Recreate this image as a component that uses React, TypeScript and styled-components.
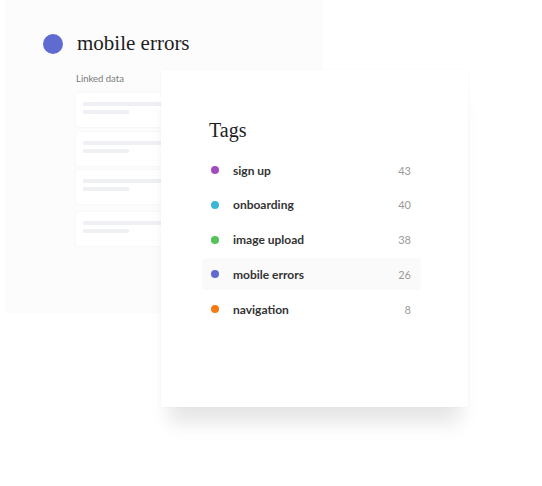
import React from "react";
import styled, { createGlobalStyle } from "styled-components";

const Global = createGlobalStyle`
  html, body { margin: 0; padding: 0; background: #ffffff; }
  body { font-family: Lato, "Liberation Sans", sans-serif; }
`;

const Stage = styled.div`
  position: relative;
  width: 542px;
  height: 486px;
  overflow: hidden;
  background: #ffffff;
`;

const BackPanel = styled.div`
  margin-left: 5px;
  width: 318px;
  height: 313px;
  background: #fcfcfc;
  box-sizing: border-box;
  padding: 34px 0 0 38px;
  display: flex;
  flex-direction: column;
`;

const Heading = styled.div`
  display: flex;
  align-items: center;
  gap: 14px;
  height: 20px;
`;

const BigDot = styled.span`
  width: 20px;
  height: 20px;
  border-radius: 50%;
  background: #5f6bd1;
  flex: none;
`;

const HeadingText = styled.span`
  font-family: "Liberation Serif", serif;
  font-size: 21px;
  color: #1e1e1e;
  line-height: 20px;
  position: relative;
  top: -1px;
`;

const Linked = styled.div`
  margin: 19px 0 0 33px;
  font-size: 9.5px;
  color: #7a7a7a;
  line-height: 12px;
`;

const SkeletonList = styled.div`
  margin: 8px 0 0 33px;
  display: flex;
  flex-direction: column;
`;

const SkeletonCard = styled.div<{ $gap: number }>`
  margin-top: ${(p) => p.$gap}px;
  width: 200px;
  height: 34px;
  background: #ffffff;
  border-radius: 3px;
  box-shadow: 0 0 3px rgba(0, 0, 0, 0.05);
  box-sizing: border-box;
  padding: 9px 0 0 7px;
  display: flex;
  flex-direction: column;
  gap: 4px;
`;

const Bar = styled.div<{ $w: number }>`
  width: ${(p) => p.$w}px;
  height: 4px;
  background: #eef0f3;
  border-radius: 1px;
`;

const FrontCard = styled.div`
  position: absolute;
  left: 161px;
  top: 70px;
  width: 307px;
  height: 337px;
  background: #ffffff;
  border-radius: 2px;
  box-sizing: border-box;
  padding: 48px 0 0 41px;
  box-shadow: 0 0 3px rgba(0, 0, 0, 0.04), 0 24px 18px -8px rgba(0, 0, 0, 0.1);
`;

const Title = styled.div`
  margin-left: 7px;
  font-family: "Liberation Serif", serif;
  font-size: 20px;
  line-height: 24px;
  color: #1e1e1e;
`;

const TagList = styled.div`
  margin-top: 12px;
  width: 219px;
  display: flex;
  flex-direction: column;
  gap: 2.75px;
`;

const Row = styled.div<{ $active?: boolean }>`
  height: 32px;
  display: flex;
  align-items: center;
  padding: 0 10px 0 9px;
  border-radius: 2px;
  background: ${(p) => (p.$active ? "#fafafa" : "transparent")};
`;

const Dot = styled.span<{ $c: string }>`
  width: 8px;
  height: 8px;
  border-radius: 50%;
  background: ${(p) => p.$c};
  flex: none;
`;

const Label = styled.span`
  margin-left: 14px;
  font-size: 12px;
  font-weight: 700;
  color: #333333;
  flex: 1;
`;

const Count = styled.span`
  font-size: 11px;
  color: #9a9a9a;
`;

const tags = [
  { name: "sign up", color: "#a04cc0", count: 43 },
  { name: "onboarding", color: "#3bb7d6", count: 40 },
  { name: "image upload", color: "#55c456", count: 38 },
  { name: "mobile errors", color: "#5f6bd1", count: 26, active: true },
  { name: "navigation", color: "#f57c12", count: 8 },
];

export default function App() {
  return (
    <Stage>
      <Global />
      <BackPanel>
        <Heading>
          <BigDot />
          <HeadingText>mobile errors</HeadingText>
        </Heading>
        <Linked>Linked data</Linked>
        <SkeletonList>
          {[0, 5, 4, 8].map((g, i) => (
            <SkeletonCard key={i} $gap={g}>
              <Bar $w={190} />
              <Bar $w={46} />
            </SkeletonCard>
          ))}
        </SkeletonList>
      </BackPanel>
      <FrontCard>
        <Title>Tags</Title>
        <TagList>
          {tags.map((t) => (
            <Row key={t.name} $active={t.active}>
              <Dot $c={t.color} />
              <Label>{t.name}</Label>
              <Count>{t.count}</Count>
            </Row>
          ))}
        </TagList>
      </FrontCard>
    </Stage>
  );
}
